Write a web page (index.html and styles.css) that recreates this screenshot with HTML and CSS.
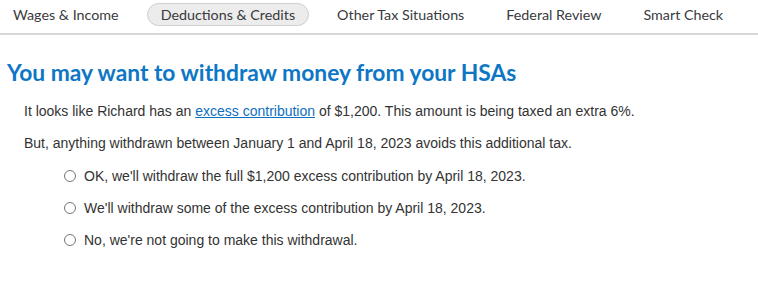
FILE: index.html
```html
<!DOCTYPE html>
<html>
<head>
<meta charset="utf-8">
<link rel="stylesheet" href="styles.css">
</head>
<body>
<nav class="tabs">
  <span class="tab">Wages &amp; Income</span>
  <span class="tab active">Deductions &amp; Credits</span>
  <span class="tab">Other Tax Situations</span>
  <span class="tab">Federal Review</span>
  <span class="tab">Smart Check</span>
</nav>
<main class="content">
  <h1 class="title">You may want to withdraw money from your HSAs</h1>
  <p class="para">It looks like Richard has an <a class="link" href="#">excess contribution</a> of $1,200. This amount is being taxed an extra 6%.</p>
  <p class="para">But, anything withdrawn between January 1 and April 18, 2023 avoids this additional tax.</p>
  <div class="options">
    <label class="option"><span class="radio"></span>OK, we'll withdraw the full $1,200 excess contribution by April 18, 2023.</label>
    <label class="option"><span class="radio"></span>We'll withdraw some of the excess contribution by April 18, 2023.</label>
    <label class="option"><span class="radio"></span>No, we're not going to make this withdrawal.</label>
  </div>
</main>
</body>
</html>
```
FILE: styles.css
```css
html, body { margin: 0; padding: 0; background: #fff; }
body { font-family: "Liberation Sans", Arial, sans-serif; color: #333; }

.tabs {
  display: flex;
  align-items: flex-start;
  height: 30px;
  padding-top: 3px;
  border-bottom: 2px solid #d8d8d8;
  padding-left: 12px;
  font-family: Lato, "Noto Sans", sans-serif;
  font-size: 14.3px;
  color: #393a3d;
  overflow: hidden;
}
.tab {
  flex-shrink: 0;
  white-space: nowrap;
  padding: 3px 13px;
  margin-right: 14px;
  border: 1px solid transparent;
  border-radius: 12px;
  line-height: 15px;
}
.tab:first-child { padding-left: 0; }
.tab.active {
  background: #ececec;
  border-color: #cfcfcf;
}

.content { padding: 0 7px; }
.title {
  margin: 23px 0 0;
  font-family: Lato, "Noto Sans", sans-serif;
  font-weight: 700;
  font-size: 22.8px;
  color: #0d77c5;
  line-height: 28px;
}
.para {
  margin: 14px 0 0 17px;
  font-size: 14px;
  line-height: 22px;
}
.para + .para { margin-top: 10px; }
.link { color: #0d6fbf; }
.options {
  margin: 11px 0 0 57px;
  display: flex;
  flex-direction: column;
  gap: 10px;
}
.option {
  display: flex;
  align-items: center;
  font-size: 14px;
  line-height: 22px;
}
.radio {
  width: 10px;
  height: 10px;
  border: 1px solid #767676;
  border-radius: 50%;
  margin-right: 8px;
  box-sizing: content-box;
}
```
